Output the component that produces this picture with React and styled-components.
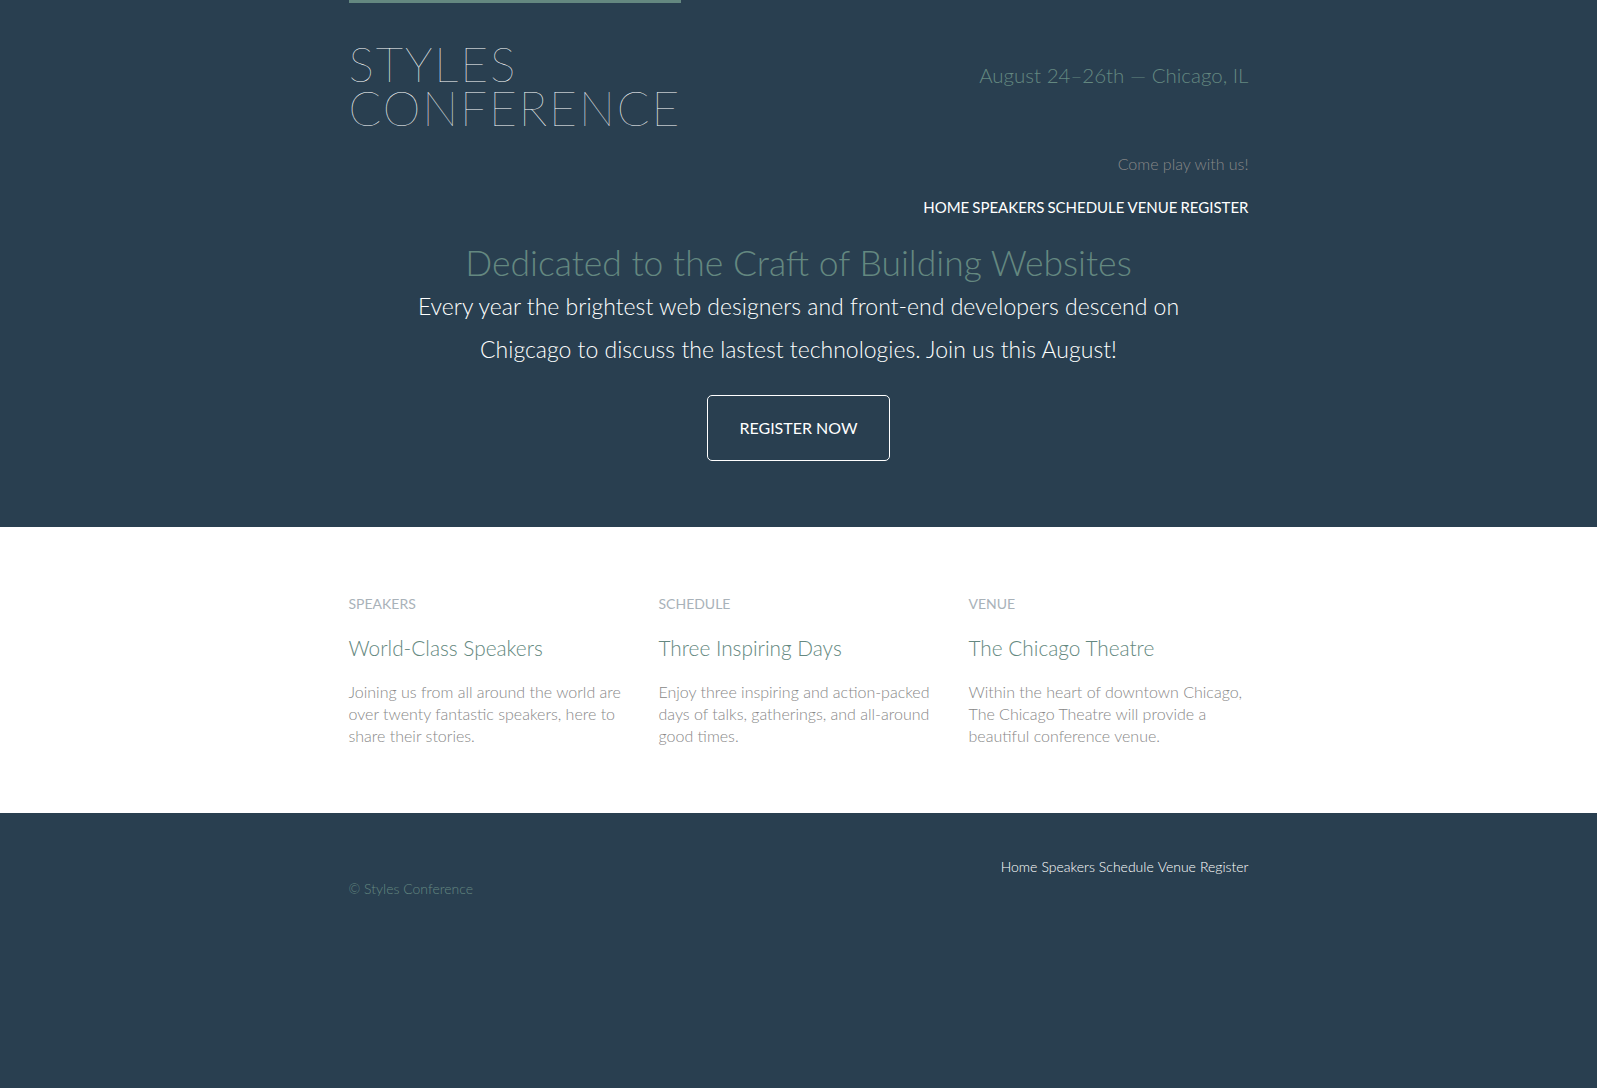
import React from "react";
import styled, { createGlobalStyle } from "styled-components";

const GlobalStyle = createGlobalStyle`
    html, body {
        margin: 0;
        padding: 0;
        background: #293f50;
    }
    body {
        font-family: Lato, "Open Sans", sans-serif;
        font-weight: 300;
        font-size: 16px;
        line-height: 22px;
        color: #888;
    }
    h1, h2, h3, h5, p {
        margin: 0;
    }
    a {
        text-decoration: none;
    }
`;

const Container = styled.div`
    width: 900px;
    margin: 0 auto;
`;

const Header = styled.header`
    background: #293f50;
`;

const HeaderTop = styled.div`
    display: flex;
    justify-content: space-between;
    align-items: flex-start;
`;

const Logo = styled.a`
    display: block;
    border-top: 3px solid #648880;
    padding: 39px 0 22px;
    color: #fff;
    font-family: "Lato Hairline", "Lato Thin", Lato, sans-serif;
    font-size: 48px;
    font-weight: 100;
    line-height: 44px;
    letter-spacing: 1.9px;
    text-transform: uppercase;
`;

const Tagline = styled.h3`
    margin-top: 64px;
    color: #648880;
    font-size: 20.5px;
    font-weight: 300;
    line-height: 22px;
`;

const Subline = styled.p`
    text-align: right;
    margin-top: 1px;
    font-size: 16px;
`;

const Nav = styled.nav`
    display: flex;
    justify-content: flex-end;
    gap: ${(p) => (p.$small ? "4px" : "3px")};
    margin-top: ${(p) => (p.$small ? "0" : "21px")};
`;

const NavLink = styled.a`
    color: #fff;
    font-size: ${(p) => (p.$small ? "14px" : "15px")};
    font-weight: ${(p) => (p.$small ? 300 : 400)};
    text-transform: ${(p) => (p.$small ? "none" : "uppercase")};
`;

const Hero = styled.section`
    display: flex;
    flex-direction: column;
    align-items: center;
    text-align: center;
    padding: 23px 0 66px;
`;

const HeroTitle = styled.h1`
    color: #648880;
    font-size: 35.5px;
    font-weight: 300;
    line-height: 44px;
`;

const HeroText = styled.p`
    color: #fff;
    font-size: 23px;
    line-height: 43px;
`;

const RegisterButton = styled.a`
    display: flex;
    align-items: center;
    justify-content: center;
    box-sizing: border-box;
    width: 183px;
    height: 66px;
    margin-top: 24px;
    border: 1px solid #fff;
    border-radius: 5px;
    color: #fff;
    font-size: 16px;
    font-weight: 400;
    text-transform: uppercase;
`;

const Teasers = styled.section`
    background: #fff;
`;

const TeaserGrid = styled(Container)`
    display: grid;
    grid-template-columns: repeat(3, 280px);
    column-gap: 30px;
    padding: 66px 0 66px;
`;

const Teaser = styled.div`
    display: flex;
    flex-direction: column;
`;

const Label = styled.h5`
    color: #a9b2b9;
    font-size: 14px;
    font-weight: 400;
    line-height: 22px;
    text-transform: uppercase;
`;

const TeaserTitle = styled.h3`
    margin-top: 22px;
    color: #648880;
    font-size: 20.8px;
    font-weight: 300;
    line-height: 22px;
`;

const TeaserText = styled.p`
    margin-top: 22px;
    color: #888;
`;

const Footer = styled.footer`
    background: #293f50;
    padding: 43px 0 44px;
`;

const Copyright = styled.small`
    display: block;
    color: #648880;
    font-size: 14px;
    line-height: 22px;
`;

const links = ["Home", "Speakers", "Schedule", "Venue", "Register"];

const teasers = [
    {
        label: "Speakers",
        title: "World-Class Speakers",
        text: "Joining us from all around the world are over twenty fantastic speakers, here to share their stories.",
    },
    {
        label: "Schedule",
        title: "Three Inspiring Days",
        text: "Enjoy three inspiring and action-packed days of talks, gatherings, and all-around good times.",
    },
    {
        label: "Venue",
        title: "The Chicago Theatre",
        text: "Within the heart of downtown Chicago, The Chicago Theatre will provide a beautiful conference venue.",
    },
];

const App = () => {
    return (
        <>
            <GlobalStyle />
            <Header>
                <Container>
                    <HeaderTop>
                        <Logo href="#">
                            Styles
                            <br />
                            Conference
                        </Logo>
                        <Tagline>August 24–26th — Chicago, IL</Tagline>
                    </HeaderTop>
                    <Subline>Come play with us!</Subline>
                    <Nav>
                        {links.map((l) => (
                            <NavLink key={l} href="#">
                                {l}
                            </NavLink>
                        ))}
                    </Nav>
                    <Hero>
                        <HeroTitle>Dedicated to the Craft of Building Websites</HeroTitle>
                        <HeroText>
                            Every year the brightest web designers and front-end developers descend on
                            <br />
                            Chigcago to discuss the lastest technologies. Join us this August!
                        </HeroText>
                        <RegisterButton href="#">Register Now</RegisterButton>
                    </Hero>
                </Container>
            </Header>

            <Teasers>
                <TeaserGrid>
                    {teasers.map((t) => (
                        <Teaser key={t.label}>
                            <Label>{t.label}</Label>
                            <TeaserTitle>{t.title}</TeaserTitle>
                            <TeaserText>{t.text}</TeaserText>
                        </Teaser>
                    ))}
                </TeaserGrid>
            </Teasers>

            <Footer>
                <Container>
                    <Nav as="div" $small>
                        {links.map((l) => (
                            <NavLink key={l} href="#" $small>
                                {l}
                            </NavLink>
                        ))}
                    </Nav>
                    <Copyright>© Styles Conference</Copyright>
                </Container>
            </Footer>
        </>
    );
};

export default App;
